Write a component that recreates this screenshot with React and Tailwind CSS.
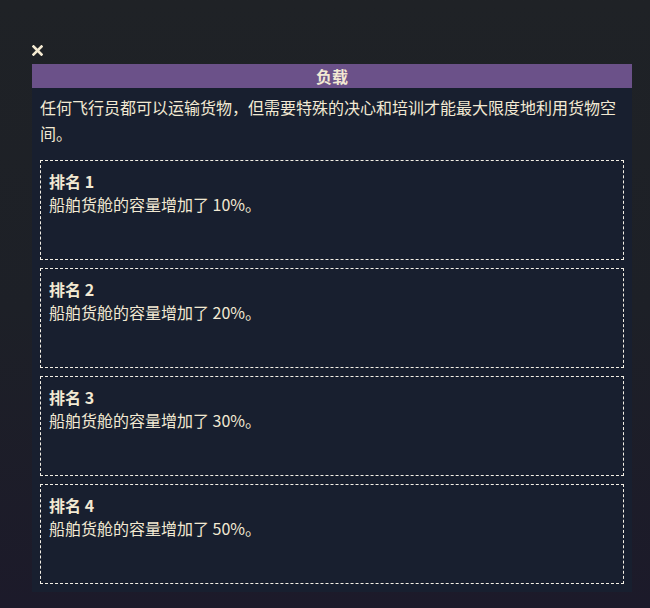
export default function App() {
  const ranks = [
    { rank: 1, pct: '10%' },
    { rank: 2, pct: '20%' },
    { rank: 3, pct: '30%' },
    { rank: 4, pct: '50%' },
  ];

  return (
    <div
      className="w-full h-[608px] overflow-hidden bg-gradient-to-b from-[#1f2226] via-[#1d2027] to-[#1c1a2a] text-[#f2e9d3] pt-[44px] pl-[32px]"
      style={{ fontFamily: '"Noto Sans CJK SC", "Noto Sans", sans-serif' }}
    >
      <div className="h-[20px] flex items-start">
        <svg width="11" height="11" viewBox="0 0 11 11" className="mt-[1px]">
          <path d="M1.5 1.5 L9.5 9.5 M9.5 1.5 L1.5 9.5" stroke="#f4ead2" strokeWidth="2.6" strokeLinecap="square" />
        </svg>
      </div>

      <div className="w-[600px] bg-[#181f2f]">
        <div className="h-6 bg-[#6b5189] text-center text-[16px] leading-6 font-bold">负载</div>
        <div className="px-2 pb-2">
          <p className="pt-[6px] mb-[14px] text-[16px] leading-[26px]">
            任何飞行员都可以运输货物，但需要特殊的决心和培训才能最大限度地利用货物空间。
          </p>
          <div className="flex flex-col gap-2">
            {ranks.map((r) => (
              <div key={r.rank} className="h-[100px] border border-dashed border-[#f4f0e6] px-2 pt-[9px]">
                <div className="text-[16px] leading-[23px] font-bold">排名 {r.rank}</div>
                <div className="text-[16px] leading-[23px]">船舶货舱的容量增加了 {r.pct}。</div>
              </div>
            ))}
          </div>
        </div>
      </div>
    </div>
  );
}
